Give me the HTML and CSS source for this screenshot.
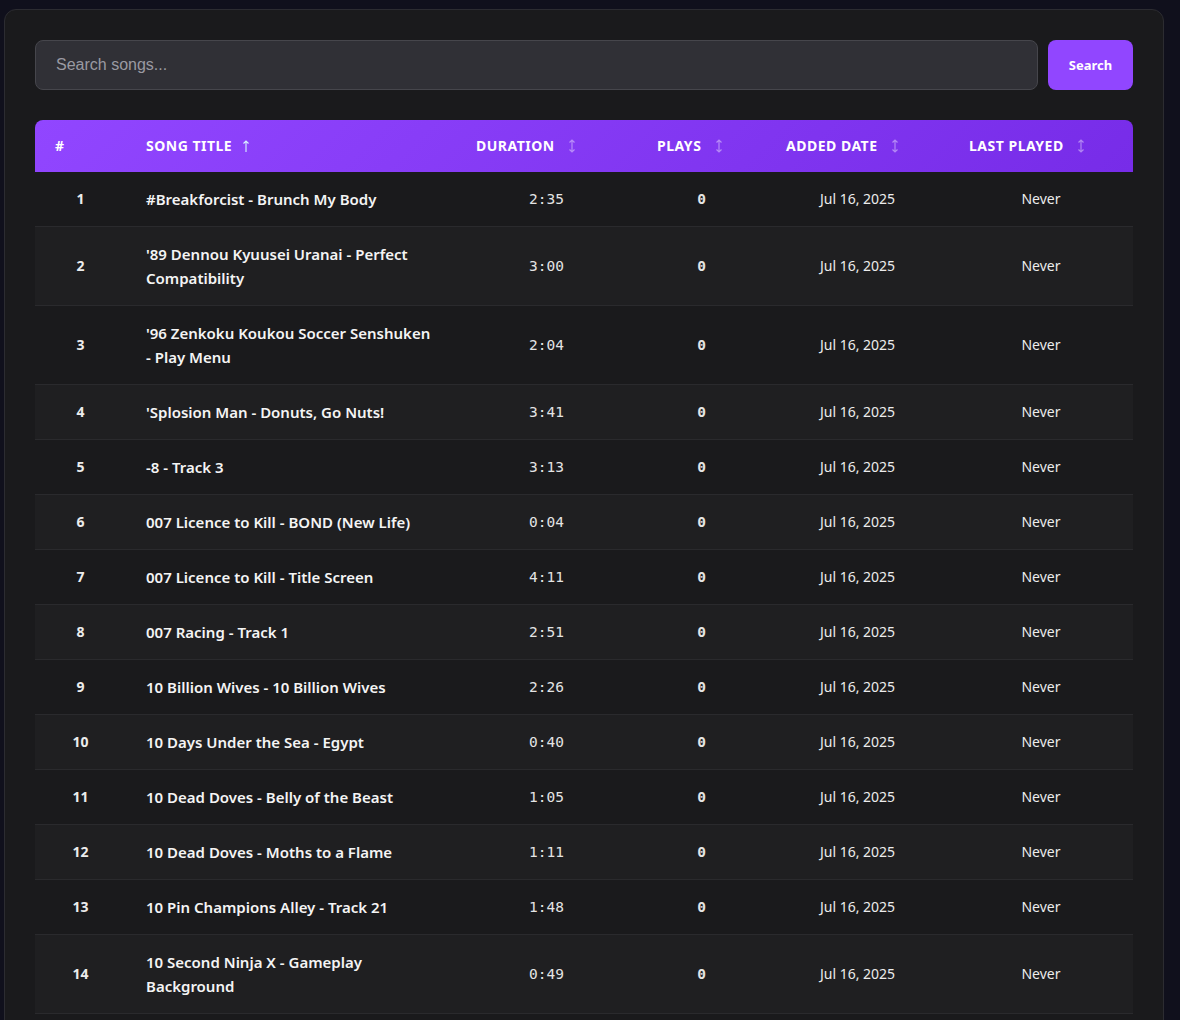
FILE: index.html
```html
<!DOCTYPE html>
<html>
<head>
<meta charset="utf-8">
<link rel="stylesheet" href="styles.css">
</head>
<body>
<div class="panel">
  <div class="search-row">
    <input class="search-input" type="text" placeholder="Search songs...">
    <button class="search-btn">Search</button>
  </div>
  <table class="songs">
    <colgroup>
      <col class="c-num"><col class="c-title"><col class="c-dur"><col class="c-plays"><col class="c-added"><col class="c-last">
    </colgroup>
    <thead>
      <tr>
        <th>#</th>
        <th>Song Title <svg class="sort active" width="8" height="14" viewBox="0 0 8 14"><path d="M4 13V2M1.5 4.5L4 2l2.5 2.5" fill="none" stroke="currentColor" stroke-width="1.1"/></svg></th>
        <th>Duration <svg class="sort" width="8" height="16" viewBox="0 0 8 16"><path d="M4 2v12M1.5 4.5L4 2l2.5 2.5M1.5 11.5L4 14l2.5-2.5" fill="none" stroke="currentColor" stroke-width="1.2"/></svg></th>
        <th>Plays <svg class="sort" width="8" height="16" viewBox="0 0 8 16"><path d="M4 2v12M1.5 4.5L4 2l2.5 2.5M1.5 11.5L4 14l2.5-2.5" fill="none" stroke="currentColor" stroke-width="1.2"/></svg></th>
        <th>Added Date <svg class="sort" width="8" height="16" viewBox="0 0 8 16"><path d="M4 2v12M1.5 4.5L4 2l2.5 2.5M1.5 11.5L4 14l2.5-2.5" fill="none" stroke="currentColor" stroke-width="1.2"/></svg></th>
        <th>Last Played <svg class="sort" width="8" height="16" viewBox="0 0 8 16"><path d="M4 2v12M1.5 4.5L4 2l2.5 2.5M1.5 11.5L4 14l2.5-2.5" fill="none" stroke="currentColor" stroke-width="1.2"/></svg></th>
      </tr>
    </thead>
    <tbody>
      <tr><td class="num">1</td><td class="title">#Breakforcist - Brunch My Body</td><td class="mono">2:35</td><td class="mono b">0</td><td class="date">Jul 16, 2025</td><td class="date">Never</td></tr>
      <tr><td class="num">2</td><td class="title">'89 Dennou Kyuusei Uranai - Perfect Compatibility</td><td class="mono">3:00</td><td class="mono b">0</td><td class="date">Jul 16, 2025</td><td class="date">Never</td></tr>
      <tr><td class="num">3</td><td class="title">'96 Zenkoku Koukou Soccer Senshuken -&nbsp;Play Menu</td><td class="mono">2:04</td><td class="mono b">0</td><td class="date">Jul 16, 2025</td><td class="date">Never</td></tr>
      <tr><td class="num">4</td><td class="title">'Splosion Man - Donuts, Go Nuts!</td><td class="mono">3:41</td><td class="mono b">0</td><td class="date">Jul 16, 2025</td><td class="date">Never</td></tr>
      <tr><td class="num">5</td><td class="title">-8 - Track 3</td><td class="mono">3:13</td><td class="mono b">0</td><td class="date">Jul 16, 2025</td><td class="date">Never</td></tr>
      <tr><td class="num">6</td><td class="title">007 Licence to Kill - BOND (New Life)</td><td class="mono">0:04</td><td class="mono b">0</td><td class="date">Jul 16, 2025</td><td class="date">Never</td></tr>
      <tr><td class="num">7</td><td class="title">007 Licence to Kill - Title Screen</td><td class="mono">4:11</td><td class="mono b">0</td><td class="date">Jul 16, 2025</td><td class="date">Never</td></tr>
      <tr><td class="num">8</td><td class="title">007 Racing - Track 1</td><td class="mono">2:51</td><td class="mono b">0</td><td class="date">Jul 16, 2025</td><td class="date">Never</td></tr>
      <tr><td class="num">9</td><td class="title">10 Billion Wives - 10 Billion Wives</td><td class="mono">2:26</td><td class="mono b">0</td><td class="date">Jul 16, 2025</td><td class="date">Never</td></tr>
      <tr><td class="num">10</td><td class="title">10 Days Under the Sea - Egypt</td><td class="mono">0:40</td><td class="mono b">0</td><td class="date">Jul 16, 2025</td><td class="date">Never</td></tr>
      <tr><td class="num">11</td><td class="title">10 Dead Doves - Belly of the Beast</td><td class="mono">1:05</td><td class="mono b">0</td><td class="date">Jul 16, 2025</td><td class="date">Never</td></tr>
      <tr><td class="num">12</td><td class="title">10 Dead Doves - Moths to a Flame</td><td class="mono">1:11</td><td class="mono b">0</td><td class="date">Jul 16, 2025</td><td class="date">Never</td></tr>
      <tr><td class="num">13</td><td class="title">10 Pin Champions Alley - Track 21</td><td class="mono">1:48</td><td class="mono b">0</td><td class="date">Jul 16, 2025</td><td class="date">Never</td></tr>
      <tr><td class="num">14</td><td class="title">10 Second Ninja X - Gameplay Background</td><td class="mono">0:49</td><td class="mono b">0</td><td class="date">Jul 16, 2025</td><td class="date">Never</td></tr>
      <tr class="tail"><td></td><td></td><td></td><td></td><td></td><td></td></tr>
    </tbody>
  </table>
</div>
</body>
</html>
```

FILE: styles.css
```css
html, body {
  margin: 0;
  background: #10101c;
}
body {
  padding: 9px 16px 0 4px;
  font-family: "Noto Sans", "Open Sans", sans-serif;
  color: #f2f2f2;
  overflow: hidden;
}
.panel {
  width: 1098px;
  background: #1a1a1c;
  border: 1px solid #2c2c31;
  border-radius: 12px;
  padding: 30px 30px 40px 30px;
}
.search-row {
  display: flex;
  gap: 10px;
  margin-bottom: 30px;
}
.search-input {
  flex: 1;
  height: 50px;
  box-sizing: border-box;
  background: #303036;
  border: 1px solid #46464c;
  border-radius: 8px;
  padding: 0 20px;
  font-family: "Liberation Sans", Arial, sans-serif;
  font-size: 16px;
  color: #eee;
  outline: none;
}
.search-input::placeholder {
  color: #9a9aa2;
}
.search-btn {
  width: 85px;
  height: 50px;
  border: none;
  border-radius: 8px;
  background: #9146ff;
  color: #fff;
  font-family: "Noto Sans", sans-serif;
  font-weight: 700;
  font-size: 13px;
}
.songs {
  width: 1098px;
  border-collapse: separate;
  border-spacing: 0;
  table-layout: fixed;
}
.c-num { width: 91px; }
.c-title { width: 330px; }
.c-dur { width: 181px; }
.c-plays { width: 129px; }
.c-added { width: 183px; }
.c-last { width: 184px; }
thead tr {
  background: linear-gradient(135deg, #9146ff 0%, #772ce8 100%);
}
thead th {
  text-align: left;
  padding: 16px 20px;
  height: 20px;
  line-height: 20px;
  font-size: 14px;
  font-weight: 700;
  text-transform: uppercase;
  letter-spacing: 0.5px;
  color: #fff;
  white-space: nowrap;
}
thead th:first-child { border-top-left-radius: 8px; }
thead th:last-child { border-top-right-radius: 8px; }
.sort {
  margin-left: 9px;
  vertical-align: -3px;
  color: rgba(255,255,255,0.42);
}
.sort.active {
  margin-left: 6px;
  color: #d8f2ff;
  vertical-align: -2px;
}
tbody tr { background: #1a1a1c; }
tbody tr:nth-child(even) { background: #1f1f21; }
tbody td {
  padding: 15px 20px;
  line-height: 24px;
  border-bottom: 1px solid #2a2a2d;
  text-align: center;
  font-size: 14px;
  color: #ececec;
  vertical-align: middle;
}
tbody tr.tail td {
  height: 24px;
}
tbody td.num {
  font-weight: 700;
  font-size: 14px;
}
tbody td.title {
  text-align: left;
  font-size: 15px;
  font-weight: 600;
  color: #f4f4f4;
}
tbody td.mono {
  font-family: "DejaVu Sans Mono", "Liberation Mono", monospace;
  font-size: 14.5px;
  color: #e4e4e4;
}
tbody td.mono.b {
  font-weight: 700;
}
```
